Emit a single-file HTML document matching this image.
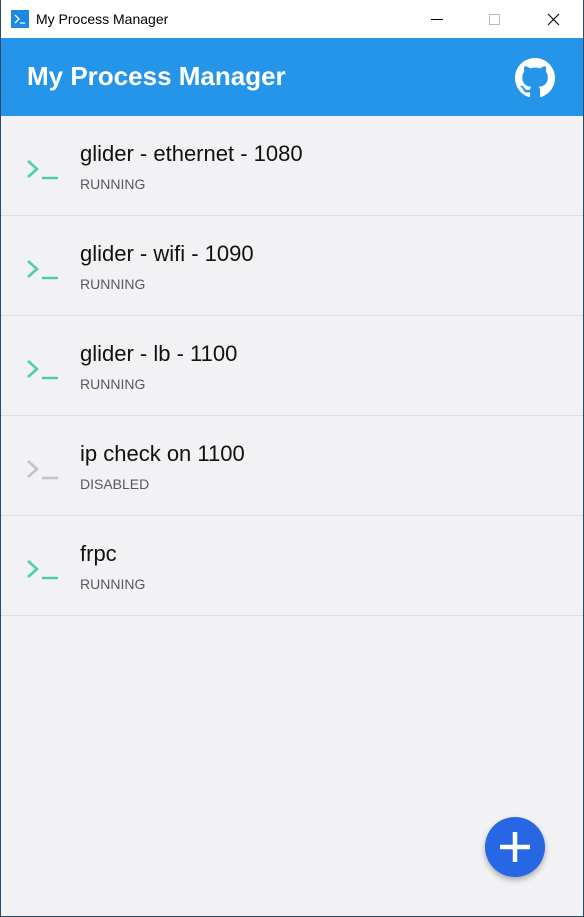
<!DOCTYPE html>
<html><head><style>
html,body{margin:0;padding:0;width:584px;height:917px;overflow:hidden;font-family:"Liberation Sans",sans-serif;}
body{background:#f2f2f4;position:relative;box-sizing:border-box;border:1px solid #2b4a68;border-top:none;}
.tb{position:absolute;left:0;top:0;width:582px;height:38px;background:#fff;}
.tb .t{position:absolute;left:35px;top:11px;font-size:14px;color:#000;}
.hdr{position:absolute;left:0;top:38px;width:582px;height:78px;background:#2595ea;}
.hdr .t{position:absolute;left:26px;top:23px;font-size:26px;font-weight:bold;color:#fff;}
.item{position:absolute;left:0;width:582px;height:99px;border-bottom:1px solid #dcdcde;}
.item .n{position:absolute;left:79px;top:25px;font-size:22px;color:#111;}
.item .s{position:absolute;left:79px;top:60px;font-size:14px;color:#555a60;}
.item svg{position:absolute;left:24px;top:42px;}
.fab{position:absolute;left:484px;top:817px;width:60px;height:60px;border-radius:50%;background:#2767e4;box-shadow:0 3px 6px rgba(0,0,0,.3);}
</style></head><body>
<div class="tb">
<svg style="position:absolute;left:10px;top:10px" width="18" height="18"><rect width="18" height="18" fill="#1e88e5"/><path d="M4 5l4 4-4 4M9 13h5" stroke="#fff" stroke-width="1.3" fill="none"/></svg>
<div class="t">My Process Manager</div>
<svg style="position:absolute;left:420px;top:12px" width="150" height="16"><path d="M10 7.5h12" stroke="#000"/><rect x="68.5" y="2.5" width="10" height="10" fill="none" stroke="#bbb"/><path d="M127 2l11 11M138 2l-11 11" stroke="#000" stroke-width="1.1"/></svg>
</div>
<div class="hdr"><div class="t">My Process Manager</div>
<svg style="position:absolute;left:514px;top:20px" width="40" height="40" viewBox="0 0 16 16"><path fill="#fff" d="M8 0C3.58 0 0 3.58 0 8c0 3.54 2.290 6.53 5.47 7.59.4.07.55-.17.55-.38 0-.19-.01-.82-.01-1.49-2.010.37-2.530-.49-2.690-.94-.09-.23-.48-.94-.82-1.13-.28-.15-.68-.52-.01-.53.63-.01 1.08.58 1.23.82.72 1.21 1.87.87 2.33.66.07-.52.28-.87.51-1.07-1.78-.2-3.64-.89-3.64-3.95 0-.87.31-1.59.82-2.15-.08-.2-.36-1.02.08-2.12 0 0 .67-.21 2.2.82.64-.18 1.32-.27 2-.27.68 0 1.36.09 2 .27 1.53-1.04 2.2-.82 2.2-.82.44 1.1.16 1.92.08 2.12.51.56.82 1.27.82 2.15 0 3.07-1.87 3.75-3.65 3.95.29.25.54.73.54 1.48 0 1.07-.01 1.930-.01 2.2 0 .21.15.46.55.38A8.013 8.013 0 0016 8c0-4.42-3.58-8-8-8z"/></svg>
</div>
<div class="item" style="top:116px"><svg width="36" height="24"><path d="M3 3l9 8-9 8M17 20h16" stroke="#4ccfa6" stroke-width="2.6" fill="none"/></svg><div class="n">glider - ethernet - 1080</div><div class="s">RUNNING</div></div>
<div class="item" style="top:216px"><svg width="36" height="24"><path d="M3 3l9 8-9 8M17 20h16" stroke="#4ccfa6" stroke-width="2.6" fill="none"/></svg><div class="n">glider - wifi - 1090</div><div class="s">RUNNING</div></div>
<div class="item" style="top:316px"><svg width="36" height="24"><path d="M3 3l9 8-9 8M17 20h16" stroke="#4ccfa6" stroke-width="2.6" fill="none"/></svg><div class="n">glider - lb - 1100</div><div class="s">RUNNING</div></div>
<div class="item" style="top:416px"><svg width="36" height="24"><path d="M3 3l9 8-9 8M17 20h16" stroke="#c4c4c6" stroke-width="2.6" fill="none"/></svg><div class="n">ip check on 1100</div><div class="s">DISABLED</div></div>
<div class="item" style="top:516px"><svg width="36" height="24"><path d="M3 3l9 8-9 8M17 20h16" stroke="#4ccfa6" stroke-width="2.6" fill="none"/></svg><div class="n">frpc</div><div class="s">RUNNING</div></div>
<div class="fab"><svg width="60" height="60"><path d="M30 15v30M15 30h30" stroke="#fff" stroke-width="4.5"/></svg></div>
</body></html>
